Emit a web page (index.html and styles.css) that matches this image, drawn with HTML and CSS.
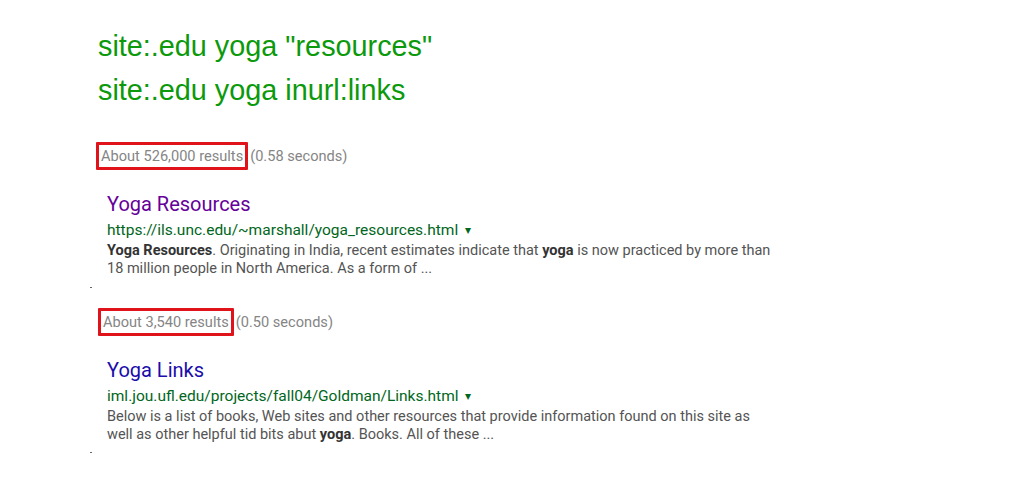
FILE: index.html
```html
<!DOCTYPE html>
<html>
<head>
<meta charset="utf-8">
<link rel="stylesheet" href="styles.css">
</head>
<body>
<div class="page">
  <div class="queries">
    <div class="query">site:.edu yoga "resources"</div>
    <div class="query">site:.edu yoga inurl:links</div>
  </div>

  <section class="block block-first">
    <div class="stats"><span class="hl">About 526,000 results</span><span class="time">(0.58 seconds)</span></div>
    <div class="result">
      <div class="title visited">Yoga Resources</div>
      <div class="url">https://ils.unc.edu/~marshall/yoga_resources.html <span class="caret">&#9662;</span></div>
      <div class="snippet"><b>Yoga Resources</b>. Originating in India, recent estimates indicate that <b>yoga</b> is now practiced by more than<br>18 million people in North America. As a form of ...</div>
    </div>
    <div class="tick"></div>
  </section>

  <section class="block block-second">
    <div class="stats"><span class="hl">About 3,540 results</span><span class="time">(0.50 seconds)</span></div>
    <div class="result">
      <div class="title">Yoga Links</div>
      <div class="url">iml.jou.ufl.edu/projects/fall04/Goldman/Links.html <span class="caret">&#9662;</span></div>
      <div class="snippet">Below is a list of books, Web sites and other resources that provide information found on this site as<br>well as other helpful tid bits abut <b>yoga</b>. Books. All of these ...</div>
    </div>
    <div class="tick tick-last"></div>
  </section>
</div>
</body>
</html>
```

FILE: styles.css
```css
html, body {
  margin: 0;
  padding: 0;
  background: #ffffff;
}

.page {
  width: 1024px;
  height: 492px;
  overflow: hidden;
  padding: 24px 0 0 90px;
  box-sizing: border-box;
}

.queries {
  padding-left: 8px;
}

.query {
  font-family: "Liberation Sans", Arial, sans-serif;
  font-size: 28.8px;
  line-height: 44px;
  color: #0c990c;
}

.block {
  font-family: Roboto, "Liberation Sans", sans-serif;
}

.block-first {
  margin-top: 30px;
}

.stats {
  display: flex;
  align-items: center;
  font-size: 14.6px;
  color: #858585;
  padding-left: 6px;
}

.hl {
  display: block;
  height: 28px;
  box-sizing: border-box;
  border: 3px solid #e0121a;
  border-radius: 1px;
  padding: 0 2px 0 2px;
  line-height: 22px;
}

.time {
  margin-left: 2px;
}

.result {
  padding-left: 17px;
  margin-top: 22px;
}

.block-second .result {
  margin-top: 22px;
}

.block-second .stats {
  padding-left: 8px;
}

.title {
  font-size: 20px;
  line-height: 24px;
  color: #1a0dab;
}

.title.visited {
  color: #660099;
}

.url {
  font-size: 15.5px;
  line-height: 22px;
  color: #006621;
  margin-top: 3px;
}

.caret {
  font-size: 12px;
  margin-left: 3px;
  vertical-align: 1px;
}

.snippet {
  font-size: 14.5px;
  line-height: 18px;
  color: #545454;
  margin-top: 1px;
}

.snippet b {
  color: #333333;
  font-weight: 700;
}

.tick {
  width: 2px;
  height: 1px;
  background: #666;
  margin: 9px 0 20px 0;
}

.tick-last {
  margin-top: 8px;
}
```
